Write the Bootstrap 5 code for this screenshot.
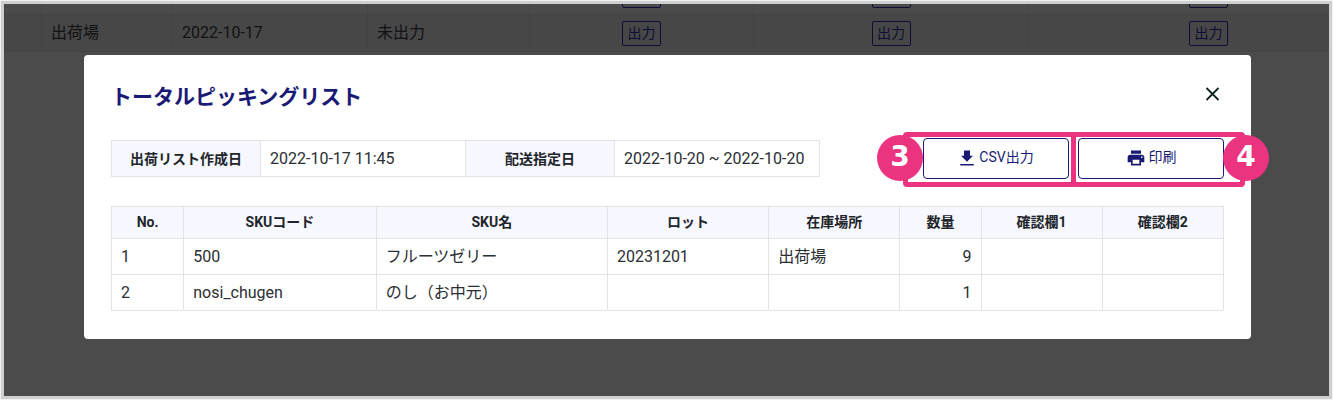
<!DOCTYPE html>
<html lang="ja">
<head>
<meta charset="utf-8">
<meta name="viewport" content="width=device-width, initial-scale=1">
<title>トータルピッキングリスト</title>
<link href="https://cdn.jsdelivr.net/npm/bootstrap@5.3.0/dist/css/bootstrap.min.css" rel="stylesheet">
<style>
body { font-family: Roboto, "Noto Sans CJK JP", sans-serif; font-size: 16px; color: #2b2e33; background: #f2f2f2; padding: 1px; }
.screen { border: 3px solid #cecfcf; background: #4b4b4b; min-height: calc(100vh - 2px); }
.orders { width: 1384px; table-layout: fixed; color: #111213; }
.orders td { height: 37px; padding: 0 9px; border: 1px solid #444; line-height: 20px; }
.orders tr:first-child td { height: 10px; border-top: 0; vertical-align: top; }
.orders tr:last-child td { background: #474747; }
.btn-out { display: block; margin: 0 auto; width: 39px; height: 25px; padding: 0; border: 1px solid #0d0d35; border-radius: 2px; background: none; color: #0d0d35; font-size: 14px; line-height: 22px; }
.clip { height: 10px; overflow: hidden; display: flex; align-items: flex-end; padding-bottom: 6px; }
.overlay { padding: 51px 78px 51px 80px; top: 0; }
.sheet { border-radius: 4px; padding: 28px 27px; }
.sheet-head { margin-bottom: 27px; }
.title-text { color: #1a1a75; font-size: 21px; line-height: 28px; font-weight: 700; }
.close-x { width: 20px; height: 20px; color: #10231c; }
.grid-lines th, .grid-lines td { border: 1px solid #e3e3e3; padding: 0 9px; line-height: 20px; }
.grid-lines th { background: #f6f7ff; color: #212529; font-size: 14px; font-weight: 700; text-align: center; }
.info { width: 708px; table-layout: fixed; }
.info th, .info td { height: 36px; }
.items { table-layout: fixed; margin-top: 27px; }
.items th { height: 32px; padding-bottom: 2px; }
.items td { height: 36px; }
.acts { gap: 9px; }
.act { width: 146px; height: 41px; gap: 3px; border: 1px solid #1a1a75; border-radius: 4px; color: #1a1a75; background: #fff; font-size: 14px; font-weight: 400; padding: 0 0 2px; }
.act:hover { border-color: #1a1a75; color: #1a1a75; }
.ring { top: -6px; bottom: -8px; border: 5px solid #eb3380; border-radius: 4px; pointer-events: none; }
.ring-a { left: -20px; right: -7px; }
.ring-b { left: -7px; right: -21px; }
.pin { width: 46px; height: 46px; top: -3px; border-radius: 50%; background: #eb3380; color: #fff; font: bold 28px/44px "DejaVu Sans", sans-serif; }
.pin-a { left: -46px; }
.pin-b { right: -45px; }
</style>
</head>
<body>
<div class="screen position-relative overflow-hidden">
  <table class="orders">
    <colgroup><col style="width:37px"><col style="width:131px"><col style="width:195px"><col style="width:162px"><col style="width:224px"><col style="width:275px"><col style="width:360px"></colgroup>
    <tbody>
      <tr><td></td><td></td><td></td><td></td>
        <td><div class="clip"><button class="btn-out flex-shrink-0" aria-label="出力"></button></div></td>
        <td><div class="clip"><button class="btn-out flex-shrink-0" aria-label="出力"></button></div></td>
        <td><div class="clip"><button class="btn-out flex-shrink-0" aria-label="出力"></button></div></td></tr>
      <tr><td></td><td>出荷場</td><td>2022-10-17</td><td>未出力</td>
        <td><button class="btn-out">出力</button></td>
        <td><button class="btn-out">出力</button></td>
        <td><button class="btn-out">出力</button></td></tr>
    </tbody>
  </table>

  <div class="overlay position-absolute start-0 end-0">
    <div class="sheet bg-white" role="dialog" aria-labelledby="sheet-title">
      <div class="sheet-head d-flex justify-content-between align-items-start">
        <h1 class="title-text mb-0" id="sheet-title">トータルピッキングリスト</h1>
        <button class="close-x btn p-0 border-0 d-flex" aria-label="閉じる">
          <svg width="20" height="20" viewBox="0 0 20 20" fill="none" stroke="currentColor" stroke-width="1.800"><path d="M2.500 5l12 12M14.500 5l-12 12"/></svg>
        </button>
      </div>
      <div class="d-flex justify-content-between align-items-center">
        <table class="grid-lines info">
          <colgroup><col style="width:149px"><col style="width:205px"><col style="width:149px"><col style="width:205px"></colgroup>
          <tbody><tr><th scope="row">出荷リスト作成日</th><td>2022-10-17 11:45</td><th scope="row">配送指定日</th><td>2022-10-20 ~ 2022-10-20</td></tr></tbody>
        </table>
        <div class="acts d-flex">
          <div class="position-relative">
            <button class="act btn d-flex align-items-center justify-content-center">
              <svg width="18" height="18" viewBox="0 0 24 24" fill="currentColor"><path d="M20 9h-4V2H8v7H4l8 8zM3 20v2h18v-2z"/></svg>CSV出力
            </button>
            <span class="ring ring-a position-absolute"></span>
            <span class="pin pin-a position-absolute text-center">3</span>
          </div>
          <div class="position-relative">
            <button class="act btn d-flex align-items-center justify-content-center">
              <svg width="20" height="20" viewBox="0 0 24 24" fill="currentColor"><path d="M19 8H5c-1.660 0-3 1.340-3 3v6h4v4h12v-4h4v-6c0-1.660-1.340-3-3-3zm-3 11H8v-5h8v5zm3-7c-.55 0-1-.45-1-1s.45-1 1-1 1 .45 1 1-.45 1-1 1zm-1-9H6v4h12V3z"/></svg>印刷
            </button>
            <span class="ring ring-b position-absolute"></span>
            <span class="pin pin-b position-absolute text-center">4</span>
          </div>
        </div>
      </div>
      <table class="grid-lines items w-100">
        <colgroup><col style="width:6.5%"><col style="width:17.3%"><col style="width:20.8%"><col style="width:14.5%"><col style="width:11.8%"><col style="width:7.3%"><col style="width:10.9%"><col style="width:10.9%"></colgroup>
        <thead><tr><th>No.</th><th>SKUコード</th><th>SKU名</th><th>ロット</th><th>在庫場所</th><th>数量</th><th>確認欄1</th><th>確認欄2</th></tr></thead>
        <tbody>
          <tr><td>1</td><td>500</td><td>フルーツゼリー</td><td>20231201</td><td>出荷場</td><td class="text-end">9</td><td></td><td></td></tr>
          <tr><td>2</td><td>nosi_chugen</td><td>のし（お中元）</td><td></td><td></td><td class="text-end">1</td><td></td><td></td></tr>
        </tbody>
      </table>
    </div>
  </div>
</div>
<script src="https://cdn.jsdelivr.net/npm/bootstrap@5.3.0/dist/js/bootstrap.bundle.min.js"></script>
</body>
</html>
